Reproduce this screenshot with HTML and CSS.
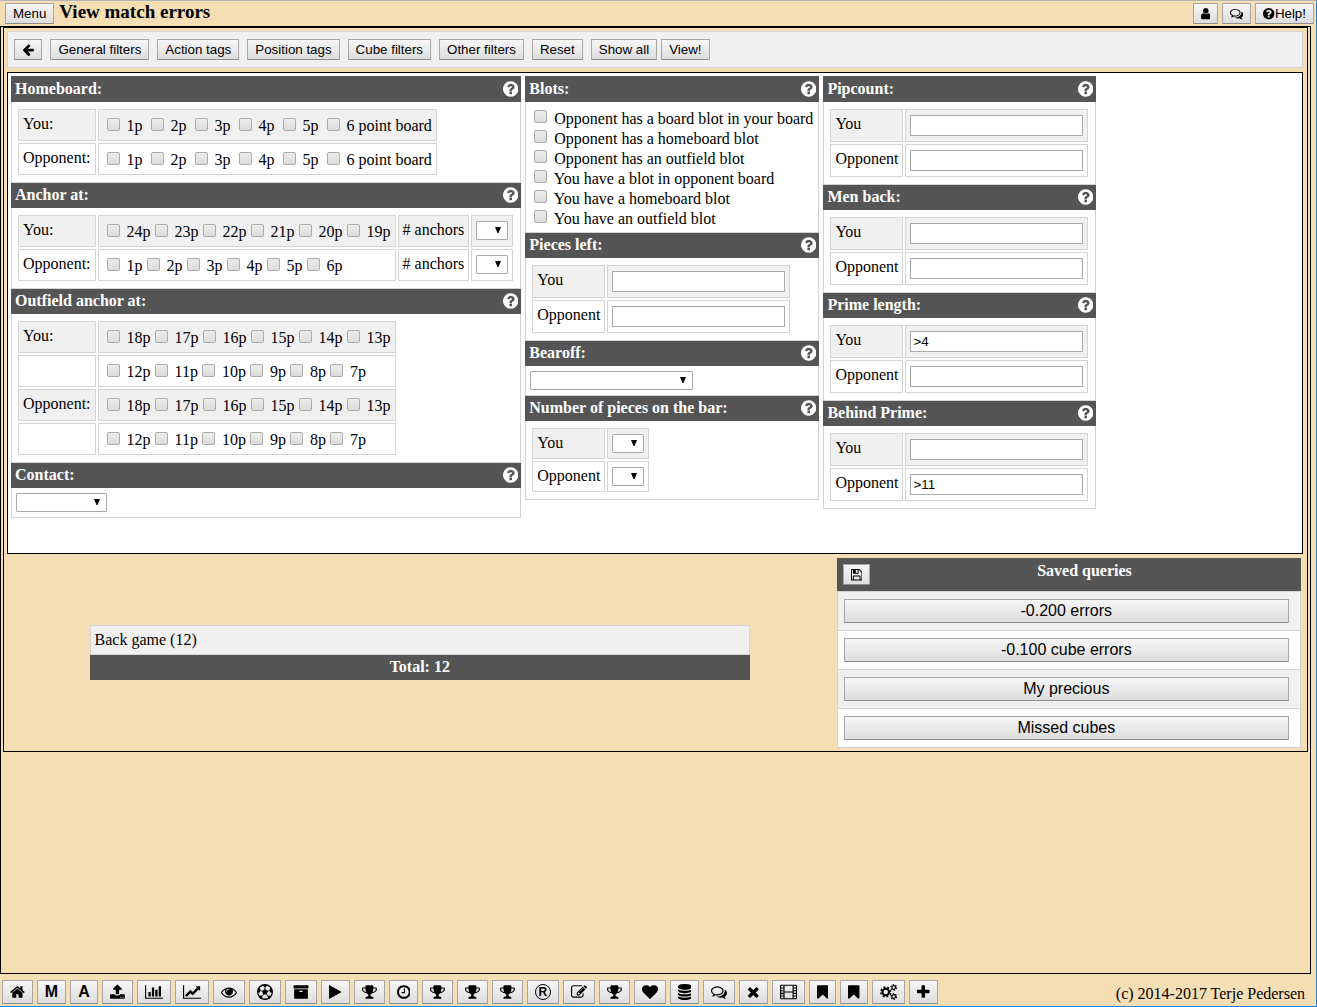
FILE: index.html
```html
<!DOCTYPE html>
<html lang="en">
<head>
<meta charset="utf-8">
<title>View match errors</title>
<link rel="stylesheet" href="styles.css">
</head>
<body>
<svg class="sprite" aria-hidden="true">
<defs>
<path id="question" d="M1024 1376v-192q0-14-9-23t-23-9h-192q-14 0-23 9t-9 23v192q0 14 9 23t23 9h192q14 0 23-9t9-23zm256-672q0-88-55.5-163t-138.5-116-170-41q-243 0-371 213-15 24 8 42l132 100q7 6 19 6 16 0 25-12 53-68 86-92 34-24 86-24 48 0 85.5 26t37.5 59q0 38-20 61t-68 45q-63 28-115.5 86.5t-52.5 125.5v36q0 14 9 23t23 9h192q14 0 23-9t9-23q0-19 21.5-49.5t54.5-49.5q32-18 49-28.5t46-35 44.5-48 28-60.5 12.5-81zm384 192q0 209-103 385.5t-279.5 279.5-385.5 103-385.5-103-279.5-279.5-103-385.5 103-385.5 279.5-279.5 385.5-103 385.5 103 279.5 279.5 103 385.5z"/>
<path id="home" d="M1472 992v480q0 26-19 45t-45 19h-384v-384h-256v384h-384q-26 0-45-19t-19-45v-480q0-1 .5-3t.5-3l575-474 575 474q1 2 1 6zm223-69l-62 74q-8 9-21 11h-3q-13 0-21-7l-692-577-692 577q-12 8-24 7-13-2-21-11l-62-74q-8-10-7-23.5t11-21.5l719-599q32-26 76-26t76 26l244 204v-195q0-14 9-23t23-9h192q14 0 23 9t9 23v408l219 182q10 8 11 21.5t-7 23.5z"/>
<path id="user" d="M1536 1399q0 109-62.5 187t-150.5 78h-854q-88 0-150.5-78t-62.5-187q0-85 8.5-160.5t31.5-152 58.5-131 94-89 134.5-34.5q131 128 313 128t313-128q76 0 134.5 34.5t94 89 58.5 131 31.5 152 8.5 160.5zm-256-887q0 159-112.5 271.5t-271.5 112.5-271.5-112.5-112.5-271.5 112.5-271.5 271.5-112.5 271.5 112.5 112.5 271.5z"/>
<path id="comments" d="M704 384q-153 0-286 52t-211.5 141-78.5 191q0 82 53 158t149 132l97 56-35 84q34-20 62-39l44-31 53 10q78 14 153 14 153 0 286-52t211.5-141 78.5-191-78.5-191-211.5-141-286-52zm0-128q191 0 353.5 68.5t256.5 186.5 94 257-94 257-256.5 186.5-353.5 68.5q-86 0-176-16-124 88-278 128-36 9-86 16h-3q-11 0-20.5-8t-11.5-21q-1-3-1-6.5t.5-6.5 2-6l2.5-5 3.5-5.5 4-5 4.5-5 4-4.5q5-6 23-25t26-29.5 22.5-29 25-38.5 20.5-44q-124-72-195-177t-71-224q0-139 94-257t256.5-186.5 353.5-68.5zm822 1169q10 24 20.5 44t25 38.5 22.5 29 26 29.5 23 25q1 1 4 4.5t4.5 5 4 5 3.5 5.5l2.5 5 2 6 .5 6.5-1 6.5q-3 14-13 22t-22 7q-50-7-86-16-154-40-278-128-90 16-176 16-271 0-472-132 58 4 88 4 161 0 309-45t264-129q125-92 192-212t67-254q0-77-23-152 129 71 204 178t75 230q0 120-71 224.5t-195 176.5z"/>
<path id="trophy" d="M522 883q-74-162-74-371h-256v96q0 78 94.5 162t235.5 113zm1078-275v-96h-256q0 209-74 371 141-29 235.5-113t94.5-162zm128-128v128q0 71-41.5 143t-112 130-173 97.5-215.5 44.5q-42 54-95 95-38 34-52.5 72.5t-14.5 89.5q0 54 30.5 91t97.5 37q75 0 133.5 45.5t58.5 114.5v64q0 14-9 23t-23 9h-832q-14 0-23-9t-9-23v-64q0-69 58.5-114.5t133.5-45.5q67 0 97.5-37t30.5-91q0-51-14.5-89.5t-52.5-72.5q-53-41-95-95-113-5-215.5-44.5t-173-97.5-112-130-41.5-143v-128q0-40 28-68t68-28h288v-96q0-66 47-113t113-47h576q66 0 113 47t47 113v96h288q40 0 68 28t28 68z"/>
<path id="play" d="M1576 927l-1328 738q-23 13-39.5 3t-16.5-36v-1472q0-26 16.5-36t39.5 3l1328 738q23 13 23 31t-23 31z"/>
<path id="heart" d="M896 1664q-26 0-44-18l-624-602q-10-8-27.5-26t-55.5-65.5-68-97.5-53.5-121-23.5-138q0-220 127-344t351-124q62 0 126.5 21.5t120 58 95.5 68.5 76 68q36-36 76-68t95.5-68.5 120-58 126.5-21.5q224 0 351 124t127 344q0 221-229 450l-623 600q-18 18-44 18z"/>
<path id="plus" d="M1600 736v192q0 40-28 68t-68 28h-416v416q0 40-28 68t-68 28h-192q-40 0-68-28t-28-68v-416h-416q-40 0-68-28t-28-68v-192q0-40 28-68t68-28h416v-416q0-40 28-68t68-28h192q40 0 68 28t28 68v416h416q40 0 68 28t28 68z"/>
<path id="times" d="M1490 1322q0 40-28 68l-136 136q-28 28-68 28t-68-28l-294-294-294 294q-28 28-68 28t-68-28l-136-136q-28-28-28-68t28-68l294-294-294-294q-28-28-28-68t28-68l136-136q28-28 68-28t68 28l294 294 294-294q28-28 68-28t68 28l136 136q28 28 28 68t-28 68l-294 294 294 294q28 28 28 68z"/>
<path id="bookmark" d="M1420 128q23 0 44 9 33 13 52.5 41t19.5 62v1289q0 34-19.5 62t-52.5 41q-19 8-44 8-48 0-83-32l-441-424-441 424q-36 33-83 33-23 0-44-9-33-13-52.5-41t-19.5-62v-1289q0-34 19.5-62t52.5-41q21-9 44-9h1048z"/>
<path id="arrow-left" d="M1664 896v128q0 53-32.5 90.5t-84.5 37.5h-704l293 294q38 36 38 90t-38 90l-75 76q-37 37-90 37-52 0-91-37l-651-652q-37-37-37-90 0-52 37-91l651-650q38-38 91-38 52 0 90 38l75 74q38 38 38 91t-38 91l-293 293h704q52 0 84.5 37.5t32.5 90.5z"/>
<path id="eye" d="M1664 960q-152-236-381-353 61 104 61 225 0 185-131.5 316.5t-316.5 131.5-316.5-131.5-131.5-316.5q0-121 61-225-229 117-381 353 133 205 333.5 326.5t434.5 121.5 434.5-121.5 333.5-326.5zm-720-384q0-20-14-34t-34-14q-125 0-214.5 89.5t-89.5 214.5q0 20 14 34t34 14 34-14 14-34q0-86 61-147t147-61q20 0 34-14t14-34zm848 384q0 34-20 69-140 230-376.5 368.5t-499.5 138.5-499.5-139-376.5-368q-20-35-20-69t20-69q140-229 376.5-368t499.5-139 499.5 139 376.5 368q20 35 20 69z"/>
<path id="archive" d="M1088 832q0-26-19-45t-45-19h-256q-26 0-45 19t-19 45 19 45 45 19h256q26 0 45-19t19-45zm576-192v960q0 26-19 45t-45 19h-1408q-26 0-45-19t-19-45v-960q0-26 19-45t45-19h1408q26 0 45 19t19 45zm64-448v256q0 26-19 45t-45 19h-1536q-26 0-45-19t-19-45v-256q0-26 19-45t45-19h1536q26 0 45 19t19 45z"/>
<path id="clock" d="M1024 544v448q0 14-9 23t-23 9h-320q-14 0-23-9t-9-23v-64q0-14 9-23t23-9h224v-352q0-14 9-23t23-9h64q14 0 23 9t9 23zm416 352q0-148-73-273t-198-198-273-73-273 73-198 198-73 273 73 273 198 198 273 73 273-73 198-198 73-273zm224 0q0 209-103 385.5t-279.5 279.5-385.5 103-385.5-103-279.5-279.5-103-385.5 103-385.5 279.5-279.5 385.5-103 385.5 103 279.5 279.5 103 385.5z"/>
<path id="upload" d="M1344 1472q0-26-19-45t-45-19-45 19-19 45 19 45 45 19 45-19 19-45zm256 0q0-26-19-45t-45-19-45 19-19 45 19 45 45 19 45-19 19-45zm128-224v320q0 40-28 68t-68 28h-1472q-40 0-68-28t-28-68v-320q0-40 28-68t68-28h427q21 56 70.5 92t110.5 36h256q61 0 110.5-36t70.5-92h427q40 0 68 28t28 68zm-325-648q-17 40-59 40h-256v448q0 26-19 45t-45 19h-256q-26 0-45-19t-19-45v-448h-256q-42 0-59-40-17-39 14-69l448-448q18-19 45-19t45 19l448 448q31 30 14 69z"/>
<path id="bar-chart" d="M640 896v512h-256v-512h256zm384-512v1024h-256v-1024h256zm1024 1152v128h-2048v-1536h128v1408h1920zm-640-896v768h-256v-768h256zm384-384v1152h-256v-1152h256z"/>
<path id="line-chart" d="M2048 1536v128h-2048v-1536h128v1408h1920zm-128-1248v435q0 21-19.5 29.5t-35.5-7.5l-121-121-633 633q-10 10-23 10t-23-10l-233-233-416 416-192-192 585-585q10-10 23-10t23 10l233 233 464-464-121-121q-16-16-7.5-35.5t29.5-19.5h435q14 0 23 9t9 23z"/>
<path id="floppy" d="M512 1536h768v-384h-768v384zm896 0h128v-896q0-14-10-38.5t-20-34.5l-281-281q-10-10-34-20t-39-10v416q0 40-28 68t-68 28h-576q-40 0-68-28t-28-68v-416h-128v1280h128v-416q0-40 28-68t68-28h832q40 0 68 28t28 68v416zm-384-928v-320q0-13-9.5-22.5t-22.5-9.5h-192q-13 0-22.5 9.5t-9.5 22.5v320q0 13 9.5 22.5t22.5 9.5h192q13 0 22.5-9.5t9.5-22.5zm640 32v928q0 40-28 68t-68 28h-1344q-40 0-68-28t-28-68v-1344q0-40 28-68t68-28h928q40 0 88 20t76 48l280 280q28 28 48 76t20 88z"/>
<path id="database" d="M896 768q237 0 443-43t325-127v170q0 69-103 128t-280 93.5-385 34.5-385-34.5-280-93.5-103-128v-170q119 84 325 127t443 43zm0 768q237 0 443-43t325-127v170q0 69-103 128t-280 93.5-385 34.5-385-34.5-280-93.5-103-128v-170q119 84 325 127t443 43zm0-384q237 0 443-43t325-127v170q0 69-103 128t-280 93.5-385 34.5-385-34.5-280-93.5-103-128v-170q119 84 325 127t443 43zm0-1152q208 0 385 34.5t280 93.5 103 128v128q0 69-103 128t-280 93.5-385 34.5-385-34.5-280-93.5-103-128v-128q0-69 103-128t280-93.5 385-34.5z"/>
<path id="edit" d="M888 1184l116-116-152-152-116 116v56h96v96h56zm440-720q-16-16-33 1l-350 350q-17 17-1 33t33-1l350-350q17-17 1-33zm80 594v190q0 119-84.5 203.5t-203.5 84.5h-832q-119 0-203.5-84.5t-84.5-203.5v-832q0-119 84.5-203.5t203.5-84.5h832q63 0 117 25 15 7 18 23 3 17-9 29l-49 49q-14 14-32 8-23-6-45-6h-832q-66 0-113 47t-47 113v832q0 66 47 113t113 47h832q66 0 113-47t47-113v-126q0-13 9-22l64-64q15-15 35-7t20 29zm-96-738l288 288-672 672h-288v-288zm444 132l-92 92-288-288 92-92q28-28 68-28t68 28l152 152q28 28 28 68t-28 68z"/>
<g id="futbol">
<circle cx="896" cy="896" r="816" fill="none" stroke="currentColor" stroke-width="150"/>
<path d="M896 560l320 232-122 376H698L576 792z"/>
<path d="M896 380L600 170 740 60h312l140 110zM1400 764l70-350 190 120 50 330-160 130zM1200 1315l350-33 20 210-230 200-130-60zM592 1315l-350-33-20 210 230 200 130-60zM392 764l-70-350-190 120-50 330 160 130z"/>
<path d="M896 640V300M1140 820l320-110M1040 1110l200 280M752 1110l-200 280M652 820L332 710" fill="none" stroke="currentColor" stroke-width="90"/>
</g>
<g id="film" fill="none" stroke="currentColor" stroke-width="128">
<rect x="64" y="140" width="1792" height="1512" rx="60"/>
<path d="M448 140v1512M1472 140v1512M448 896h1024M64 450h384M64 750h384M64 1050h384M64 1350h384M1472 450h384M1472 750h384M1472 1050h384M1472 1350h384"/>
</g>
<g id="cogs" fill="none" stroke="currentColor">
<circle cx="640" cy="896" r="370" stroke-width="240"/>
<circle cx="640" cy="896" r="550" stroke-width="170" pathLength="16" stroke-dasharray="1 1" stroke-dashoffset="-0.5"/>
<circle cx="1536" cy="384" r="205" stroke-width="140"/>
<circle cx="1536" cy="384" r="320" stroke-width="120" pathLength="12" stroke-dasharray="1 1"/>
<circle cx="1536" cy="1408" r="205" stroke-width="140"/>
<circle cx="1536" cy="1408" r="320" stroke-width="120" pathLength="12" stroke-dasharray="1 1"/>
</g>
</defs>
</svg>

<header class="topbar">
<button type="button" class="btn">Menu</button>
<h1 class="title">View match errors</h1>
<div class="topbar-tools">
<button type="button" class="btn" aria-label="Account"><svg class="icon" viewBox="256 0 1280 1792"><use href="#user"/></svg></button>
<button type="button" class="btn" aria-label="Messages"><svg class="icon" viewBox="0 0 1792 1792"><use href="#comments"/></svg></button>
<button type="button" class="btn"><svg class="icon" viewBox="128 0 1536 1792"><use href="#question"/></svg>Help!</button>
</div>
</header>

<main class="page">
<div class="workspace">
<nav class="filterbar" aria-label="Filters">
<button type="button" class="btn" aria-label="Back"><svg class="icon" viewBox="64 0 1664 1792"><use href="#arrow-left"/></svg></button>
<button type="button" class="btn">General filters</button>
<button type="button" class="btn">Action tags</button>
<button type="button" class="btn">Position tags</button>
<button type="button" class="btn">Cube filters</button>
<button type="button" class="btn">Other filters</button>
<button type="button" class="btn">Reset</button>
<div class="pair"><button type="button" class="btn">Show all</button><button type="button" class="btn">View!</button></div>
</nav>

<form class="filters">
<div class="column">
<section>
<h2 class="head">Homeboard:<a href="#help" class="help" aria-label="Help"><svg class="icon" viewBox="128 0 1536 1792"><use href="#question"/></svg></a></h2>
<div class="body">
<table class="grid">
<tr><td>You:</td><td class="choices"><label><input type="checkbox"> 1p</label> <label><input type="checkbox"> 2p</label> <label><input type="checkbox"> 3p</label> <label><input type="checkbox"> 4p</label> <label><input type="checkbox"> 5p</label> <label><input type="checkbox"> 6 point board</label></td></tr>
<tr><td>Opponent:</td><td class="choices"><label><input type="checkbox"> 1p</label> <label><input type="checkbox"> 2p</label> <label><input type="checkbox"> 3p</label> <label><input type="checkbox"> 4p</label> <label><input type="checkbox"> 5p</label> <label><input type="checkbox"> 6 point board</label></td></tr>
</table>
</div>
</section>
<section>
<h2 class="head">Anchor at:<a href="#help" class="help" aria-label="Help"><svg class="icon" viewBox="128 0 1536 1792"><use href="#question"/></svg></a></h2>
<div class="body">
<table class="grid">
<tr><td>You:</td><td class="choices"><label><input type="checkbox"> 24p</label><label><input type="checkbox"> 23p</label><label><input type="checkbox"> 22p</label><label><input type="checkbox"> 21p</label><label><input type="checkbox"> 20p</label><label><input type="checkbox"> 19p</label></td><td><label for="anchors-you"># anchors</label></td><td><select id="anchors-you" class="select-small"><option></option><option>1</option><option>2</option></select></td></tr>
<tr><td>Opponent:</td><td class="choices"><label><input type="checkbox"> 1p</label><label><input type="checkbox"> 2p</label><label><input type="checkbox"> 3p</label><label><input type="checkbox"> 4p</label><label><input type="checkbox"> 5p</label><label><input type="checkbox"> 6p</label></td><td><label for="anchors-opp"># anchors</label></td><td><select id="anchors-opp" class="select-small"><option></option><option>1</option><option>2</option></select></td></tr>
</table>
</div>
</section>
<section>
<h2 class="head">Outfield anchor at:<a href="#help" class="help" aria-label="Help"><svg class="icon" viewBox="128 0 1536 1792"><use href="#question"/></svg></a></h2>
<div class="body">
<table class="grid">
<tr><td>You:</td><td class="choices"><label><input type="checkbox"> 18p</label><label><input type="checkbox"> 17p</label><label><input type="checkbox"> 16p</label><label><input type="checkbox"> 15p</label><label><input type="checkbox"> 14p</label><label><input type="checkbox"> 13p</label></td></tr>
<tr><td></td><td class="choices"><label><input type="checkbox"> 12p</label><label><input type="checkbox"> 11p</label><label><input type="checkbox"> 10p</label><label><input type="checkbox"> 9p</label><label><input type="checkbox"> 8p</label><label><input type="checkbox"> 7p</label></td></tr>
<tr><td>Opponent:</td><td class="choices"><label><input type="checkbox"> 18p</label><label><input type="checkbox"> 17p</label><label><input type="checkbox"> 16p</label><label><input type="checkbox"> 15p</label><label><input type="checkbox"> 14p</label><label><input type="checkbox"> 13p</label></td></tr>
<tr><td></td><td class="choices"><label><input type="checkbox"> 12p</label><label><input type="checkbox"> 11p</label><label><input type="checkbox"> 10p</label><label><input type="checkbox"> 9p</label><label><input type="checkbox"> 8p</label><label><input type="checkbox"> 7p</label></td></tr>
</table>
</div>
</section>
<section>
<h2 class="head"><label for="contact">Contact:</label><a href="#help" class="help" aria-label="Help"><svg class="icon" viewBox="128 0 1536 1792"><use href="#question"/></svg></a></h2>
<div class="body"><select id="contact" class="select-medium"><option></option><option>Contact</option><option>No contact</option></select></div>
</section>
</div>

<div class="column">
<section>
<h2 class="head">Blots:<a href="#help" class="help" aria-label="Help"><svg class="icon" viewBox="128 0 1536 1792"><use href="#question"/></svg></a></h2>
<div class="body checklist">
<label><input type="checkbox"> Opponent has a board blot in your board</label>
<label><input type="checkbox"> Opponent has a homeboard blot</label>
<label><input type="checkbox"> Opponent has an outfield blot</label>
<label><input type="checkbox"> You have a blot in opponent board</label>
<label><input type="checkbox"> You have a homeboard blot</label>
<label><input type="checkbox"> You have an outfield blot</label>
</div>
</section>
<section>
<h2 class="head">Pieces left:<a href="#help" class="help" aria-label="Help"><svg class="icon" viewBox="128 0 1536 1792"><use href="#question"/></svg></a></h2>
<div class="body">
<table class="grid">
<tr><td><label for="pieces-you">You</label></td><td><input type="text" id="pieces-you"></td></tr>
<tr><td><label for="pieces-opp">Opponent</label></td><td><input type="text" id="pieces-opp"></td></tr>
</table>
</div>
</section>
<section>
<h2 class="head"><label for="bearoff">Bearoff:</label><a href="#help" class="help" aria-label="Help"><svg class="icon" viewBox="128 0 1536 1792"><use href="#question"/></svg></a></h2>
<div class="body"><select id="bearoff" class="select-large"><option></option><option>Bearoff</option><option>No bearoff</option></select></div>
</section>
<section>
<h2 class="head">Number of pieces on the bar:<a href="#help" class="help" aria-label="Help"><svg class="icon" viewBox="128 0 1536 1792"><use href="#question"/></svg></a></h2>
<div class="body">
<table class="grid">
<tr><td><label for="bar-you">You</label></td><td><select id="bar-you" class="select-small"><option></option><option>1</option><option>2</option></select></td></tr>
<tr><td><label for="bar-opp">Opponent</label></td><td><select id="bar-opp" class="select-small"><option></option><option>1</option><option>2</option></select></td></tr>
</table>
</div>
</section>
</div>

<div class="column">
<section>
<h2 class="head">Pipcount:<a href="#help" class="help" aria-label="Help"><svg class="icon" viewBox="128 0 1536 1792"><use href="#question"/></svg></a></h2>
<div class="body">
<table class="grid">
<tr><td><label for="pip-you">You</label></td><td><input type="text" id="pip-you"></td></tr>
<tr><td><label for="pip-opp">Opponent</label></td><td><input type="text" id="pip-opp"></td></tr>
</table>
</div>
</section>
<section>
<h2 class="head">Men back:<a href="#help" class="help" aria-label="Help"><svg class="icon" viewBox="128 0 1536 1792"><use href="#question"/></svg></a></h2>
<div class="body">
<table class="grid">
<tr><td><label for="men-you">You</label></td><td><input type="text" id="men-you"></td></tr>
<tr><td><label for="men-opp">Opponent</label></td><td><input type="text" id="men-opp"></td></tr>
</table>
</div>
</section>
<section>
<h2 class="head">Prime length:<a href="#help" class="help" aria-label="Help"><svg class="icon" viewBox="128 0 1536 1792"><use href="#question"/></svg></a></h2>
<div class="body">
<table class="grid">
<tr><td><label for="prime-you">You</label></td><td><input type="text" id="prime-you" value="&gt;4"></td></tr>
<tr><td><label for="prime-opp">Opponent</label></td><td><input type="text" id="prime-opp"></td></tr>
</table>
</div>
</section>
<section>
<h2 class="head">Behind Prime:<a href="#help" class="help" aria-label="Help"><svg class="icon" viewBox="128 0 1536 1792"><use href="#question"/></svg></a></h2>
<div class="body">
<table class="grid">
<tr><td><label for="behind-you">You</label></td><td><input type="text" id="behind-you"></td></tr>
<tr><td><label for="behind-opp">Opponent</label></td><td><input type="text" id="behind-opp" value="&gt;11"></td></tr>
</table>
</div>
</section>
</div>
</form>

<div class="results">
<div class="matches">
<div class="match">Back game (12)</div>
<div class="total">Total: 12</div>
</div>
<section class="saved">
<div class="saved-head">
<button type="button" class="btn" aria-label="Save query"><svg class="icon" viewBox="128 0 1536 1792"><use href="#floppy"/></svg></button>
<h2>Saved queries</h2>
</div>
<ul>
<li><button type="button" class="btn btn-large">-0.200 errors</button></li>
<li><button type="button" class="btn btn-large">-0.100 cube errors</button></li>
<li><button type="button" class="btn btn-large">My precious</button></li>
<li><button type="button" class="btn btn-large">Missed cubes</button></li>
</ul>
</section>
</div>
</div>
</main>

<footer class="bottombar">
<nav class="shortcuts" aria-label="Shortcuts">
<button type="button" class="btn btn-large" aria-label="Home"><svg class="icon" viewBox="64 0 1664 1792"><use href="#home"/></svg></button>
<button type="button" class="btn btn-large">M</button>
<button type="button" class="btn btn-large">A</button>
<button type="button" class="btn btn-large" aria-label="Upload"><svg class="icon" viewBox="64 0 1664 1792"><use href="#upload"/></svg></button>
<button type="button" class="btn btn-large" aria-label="Statistics"><svg class="icon" viewBox="0 0 2048 1792"><use href="#bar-chart"/></svg></button>
<button type="button" class="btn btn-large" aria-label="Progress"><svg class="icon" viewBox="0 0 2048 1792"><use href="#line-chart"/></svg></button>
<button type="button" class="btn btn-large" aria-label="View"><svg class="icon" viewBox="0 0 1792 1792"><use href="#eye"/></svg></button>
<button type="button" class="btn btn-large" aria-label="Matches"><svg class="icon" viewBox="0 0 1792 1792"><use href="#futbol"/></svg></button>
<button type="button" class="btn btn-large" aria-label="Archive"><svg class="icon" viewBox="0 0 1792 1792"><use href="#archive"/></svg></button>
<button type="button" class="btn btn-large" aria-label="Play"><svg class="icon" viewBox="192 0 1408 1792"><use href="#play"/></svg></button>
<button type="button" class="btn btn-large" aria-label="Tournament"><svg class="icon" viewBox="64 0 1664 1792"><use href="#trophy"/></svg></button>
<button type="button" class="btn btn-large" aria-label="Recent"><svg class="icon" viewBox="128 0 1536 1792"><use href="#clock"/></svg></button>
<button type="button" class="btn btn-large" aria-label="Tournament"><svg class="icon" viewBox="64 0 1664 1792"><use href="#trophy"/></svg></button>
<button type="button" class="btn btn-large" aria-label="Tournament"><svg class="icon" viewBox="64 0 1664 1792"><use href="#trophy"/></svg></button>
<button type="button" class="btn btn-large" aria-label="Tournament"><svg class="icon" viewBox="64 0 1664 1792"><use href="#trophy"/></svg></button>
<button type="button" class="btn btn-large"><span class="ring">R</span></button>
<button type="button" class="btn btn-large" aria-label="Edit"><svg class="icon" viewBox="0 0 1792 1792"><use href="#edit"/></svg></button>
<button type="button" class="btn btn-large" aria-label="Tournament"><svg class="icon" viewBox="64 0 1664 1792"><use href="#trophy"/></svg></button>
<button type="button" class="btn btn-large" aria-label="Favourites"><svg class="icon" viewBox="0 0 1792 1792"><use href="#heart"/></svg></button>
<button type="button" class="btn btn-large" aria-label="Database"><svg class="icon" viewBox="128 0 1536 1792"><use href="#database"/></svg></button>
<button type="button" class="btn btn-large" aria-label="Comments"><svg class="icon" viewBox="0 0 1792 1792"><use href="#comments"/></svg></button>
<button type="button" class="btn btn-large" aria-label="Close"><svg class="icon" viewBox="192 0 1408 1792"><use href="#times"/></svg></button>
<button type="button" class="btn btn-large" aria-label="Film"><svg class="icon" viewBox="0 0 1920 1792"><use href="#film"/></svg></button>
<button type="button" class="btn btn-large" aria-label="Bookmark"><svg class="icon" viewBox="256 0 1280 1792"><use href="#bookmark"/></svg></button>
<button type="button" class="btn btn-large" aria-label="Bookmark"><svg class="icon" viewBox="256 0 1280 1792"><use href="#bookmark"/></svg></button>
<button type="button" class="btn btn-large" aria-label="Settings"><svg class="icon" viewBox="0 0 1920 1792"><use href="#cogs"/></svg></button>
<button type="button" class="btn btn-large" aria-label="Add"><svg class="icon" viewBox="192 0 1408 1792"><use href="#plus"/></svg></button>
</nav>
<p class="copyright">(c) 2014-2017 Terje Pedersen</p>
</footer>
</body>
</html>
```
FILE: styles.css
```css
* {
  box-sizing: border-box;
}

body {
  display: flex;
  flex-direction: column;
  min-height: 100vh;
  margin: 0;
  border-top: 1px solid #b4b4b4;
  border-right: 1px solid #1883d7;
  border-bottom: 1px solid #1883d7;
  background: #f5deb3;
  color: #000;
  font-family: "Liberation Serif", "Times New Roman", serif;
  font-size: 16px;
  line-height: 18px;
}

h1, h2, p, ul {
  margin: 0;
  padding: 0;
}

.sprite {
  display: none;
}

.icon {
  display: block;
  flex: none;
  height: 1em;
  width: auto;
  fill: currentColor;
}

/* Buttons */

.btn {
  display: inline-flex;
  align-items: center;
  justify-content: center;
  height: 21px;
  padding: 0 7px;
  border: 1px solid #a6a6a6;
  border-bottom-color: #8e8e8e;
  border-radius: 1px;
  background: linear-gradient(#f6f6f6, #dddddd);
  color: #000;
  font-family: "Liberation Sans", Arial, sans-serif;
  white-space: nowrap;
}

.btn-large {
  height: 24px;
  font-size: 16px;
}

/* Top bar */

.topbar {
  display: flex;
  align-items: flex-start;
  gap: 5px;
  padding: 2px 2px 2px 5px;
}

.title {
  font-size: 19px;
  line-height: 18px;
}

.topbar-tools {
  display: flex;
  gap: 4px;
  margin-left: auto;
}

/* Page frame */

.page {
  flex: 1;
  margin-right: 5px;
  padding: 0 2px;
  border: 1px solid #000;
}

.workspace {
  padding: 3px 4px 3px 3px;
  border: 1px solid #000;
}

.filterbar {
  display: flex;
  flex-wrap: wrap;
  gap: 8px;
  margin-bottom: 4px;
  padding: 7px 6px;
  border: 1px solid #d3d3d3;
  background: #f0f0f0;
}

.pair {
  display: flex;
  gap: 4px;
}

/* Filter panels */

.filters {
  display: flex;
  align-items: flex-start;
  gap: 4px;
  padding: 3px 3px 35px;
  border: 1px solid #000;
  background: #fff;
}

.column {
  border-top: 1px solid #555;
  white-space: nowrap;
}

.head {
  display: flex;
  justify-content: space-between;
  padding: 3px 3px 4px 4px;
  background: #555;
  color: #fff;
  font-size: 16px;
}

.help {
  color: #fff;
  font-size: 18px;
}

.body {
  padding: 5px 5px 5px 4px;
  border: 1px solid #d3d3d3;
  border-top: 0;
}

.grid {
  border-spacing: 2px;
}

.grid td {
  padding: 4px;
  border: 1px solid #d3d3d3;
  line-height: 20px;
  vertical-align: top;
}

.grid tr:nth-child(odd) td {
  background: #f0f0f0;
}

.checklist label {
  display: block;
  line-height: 16px;
}

input[type="checkbox"] {
  appearance: none;
  width: 13px;
  height: 13px;
  margin: 3px 3px 0 4px;
  border: 1px solid #ababab;
  border-radius: 2px;
  background: linear-gradient(#ececec, #dcdcdc);
  vertical-align: 1px;
}

.choices input[type="checkbox"] {
  margin-top: 4px;
  vertical-align: 0;
}

input[type="checkbox"]:checked {
  background: #555;
}

input[type="text"] {
  display: block;
  width: 173px;
  height: 21px;
  margin: 1px 0;
  padding: 1px 2px;
  border: 1px solid #a9a9a9;
  background: #fff;
  font-family: "Liberation Sans", Arial, sans-serif;
}

select {
  appearance: none;
  display: block;
  height: 19px;
  padding: 0 16px 0 4px;
  border: 1px solid #a9a9a9;
  border-radius: 1px;
  background: #fff url("data:image/svg+xml,%3Csvg xmlns='http://www.w3.org/2000/svg' width='6' height='6'%3E%3Cpath d='M0 0h6L3.5 6h-1z'/%3E%3C/svg%3E") no-repeat right 6px top 5px;
  font-family: "Liberation Sans", Arial, sans-serif;
}

.select-small {
  width: 32px;
  margin: 1px 0;
}

.select-medium {
  width: 91px;
}

.select-large {
  width: 163px;
}

/* Results and saved queries */

.results {
  display: grid;
  grid-template-columns: 16fr 9fr;
  gap: 4px;
  align-items: center;
  padding: 4px 2px 0 0;
}

.matches {
  width: 80%;
  margin: 0 auto;
  padding-bottom: 2px;
}

.match {
  padding: 5px 4px;
  border: 1px solid #d3d3d3;
  background: #f0f0f0;
}

.total {
  padding: 3px 4px 4px;
  background: #555;
  color: #fff;
  font-weight: bold;
  text-align: center;
}

.saved-head {
  display: flex;
  align-items: flex-start;
  gap: 4px;
  padding: 6px;
  background: #555;
  color: #fff;
}

.saved-head h2 {
  flex: 1;
  margin-top: -2px;
  font-size: 16px;
  text-align: center;
}

.saved ul {
  border: 1px solid #d3d3d3;
  list-style: none;
}

.saved li {
  padding: 7px 11px 7px 6px;
  background: #fff;
}

.saved li:nth-child(odd) {
  background: #f0f0f0;
}

.saved li + li {
  border-top: 1px solid #d3d3d3;
}

.saved li .btn {
  display: flex;
  width: 100%;
}

/* Bottom bar */

.bottombar {
  display: flex;
  align-items: center;
  justify-content: space-between;
  padding: 6px 11px 2px 2px;
}

.shortcuts {
  display: flex;
  gap: 4px;
}

.shortcuts .btn {
  font-weight: bold;
}

.ring {
  width: 16px;
  height: 16px;
  border: 1px solid #000;
  border-radius: 50%;
  font-size: 12px;
  line-height: 14px;
  text-align: center;
}

.copyright {
  padding-top: 4px;
}
```
